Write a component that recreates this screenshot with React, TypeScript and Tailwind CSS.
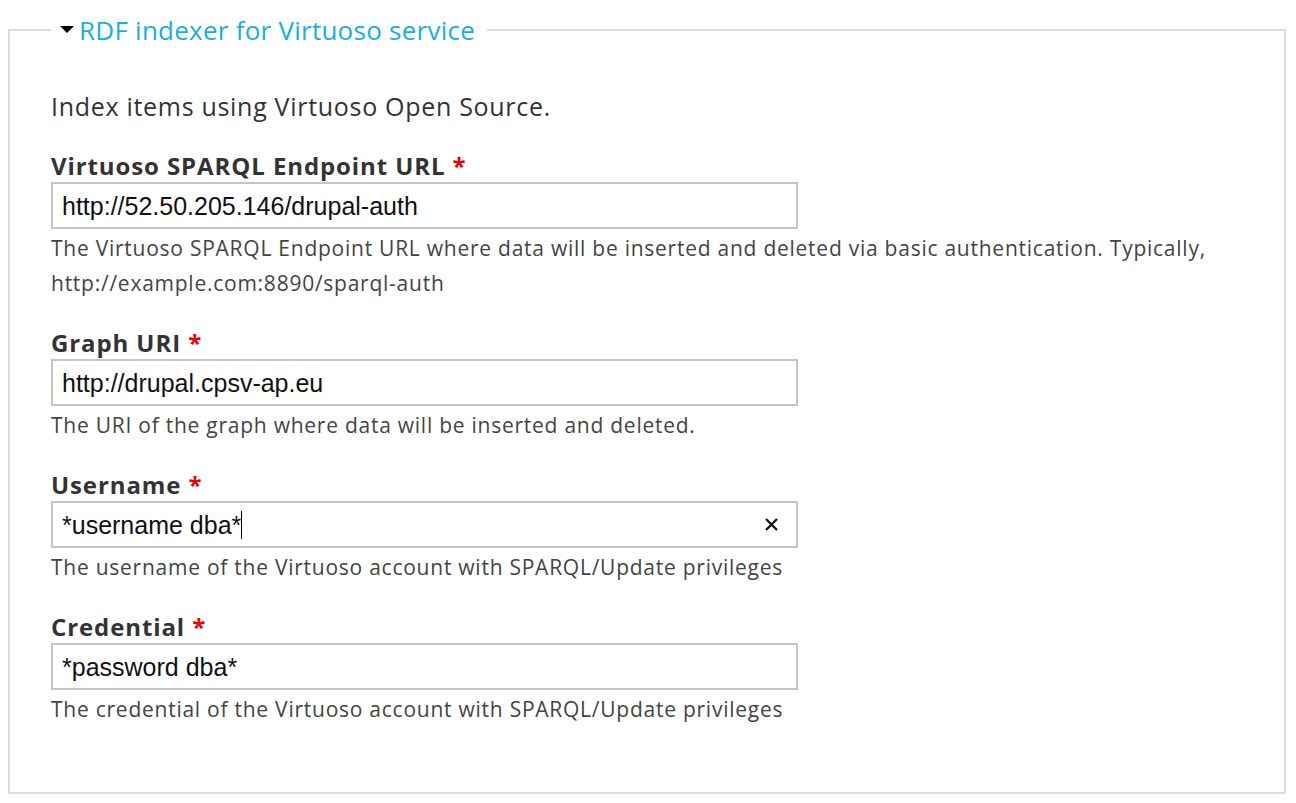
import React from 'react';

type Field = {
    label: string;
    value: string;
    help: string[];
    clearable?: boolean;
};

const fields: Field[] = [
    {
        label: 'Virtuoso SPARQL Endpoint URL',
        value: 'http://52.50.205.146/drupal-auth',
        help: [
            'The Virtuoso SPARQL Endpoint URL where data will be inserted and deleted via basic authentication. Typically,',
            'http://example.com:8890/sparql-auth',
        ],
    },
    {
        label: 'Graph URI',
        value: 'http://drupal.cpsv-ap.eu',
        help: ['The URI of the graph where data will be inserted and deleted.'],
    },
    {
        label: 'Username',
        value: '*username dba*',
        help: ['The username of the Virtuoso account with SPARQL/Update privileges'],
        clearable: true,
    },
    {
        label: 'Credential',
        value: '*password dba*',
        help: ['The credential of the Virtuoso account with SPARQL/Update privileges'],
    },
];

function FormField({ field, first }: { field: Field; first: boolean }) {
    return (
        <div className={first ? 'mt-[26px]' : 'mt-[26px]'}>
            <label className="block text-[24px] leading-[32px] font-bold tracking-[0.9px] text-[#333]">
                {field.label} <span className="text-[#e00]">*</span>
            </label>
            <div className="flex items-center w-[747px] h-[47px] border-2 border-[#c4c4c4] bg-white pl-[9px] pr-[14px]">
                <span className="flex-1 text-[25px] leading-[30px] text-[#111] font-['Liberation_Sans',Arial,sans-serif]">
                    {field.value}
                    {field.clearable && <span className="inline-block w-px h-[28px] bg-black align-middle -mt-[4px]"></span>}
                </span>
                {field.clearable && (
                    <svg width="15" height="15" viewBox="0 0 15 15" className="mr-[3px]">
                        <path d="M2 2 L13 13 M13 2 L2 13" stroke="#111" strokeWidth="2.3" />
                    </svg>
                )}
            </div>
            <div className="mt-[2px]">
                {field.help.map((line) => (
                    <p key={line} className="text-[21px] leading-[35px] tracking-[0.75px] text-[#444]">
                        {line}
                    </p>
                ))}
            </div>
        </div>
    );
}

export default function App() {
    return (
        <div className="min-h-[803px] bg-white font-['Open_Sans','Noto_Sans',sans-serif]">
            <fieldset className="mt-[12px] ml-[8px] mr-[10px] border-2 border-[#dcdcdc] pl-[41px] pr-[41px] pt-[40px] pb-[65px] min-w-0">
                <legend className="pl-[9px] pr-[12px] flex items-center gap-[5px] text-[26px] leading-[36px] tracking-[0.25px] text-[#17aee6]">
                    <svg width="14" height="8" viewBox="0 0 14 8">
                        <path d="M0 0 H14 L7 7 Z" fill="#000" />
                    </svg>
                    <span>RDF indexer for Virtuoso service</span>
                </legend>
                <p className="text-[25px] leading-[36px] tracking-[0.7px] text-[#333]">Index items using Virtuoso Open Source.</p>
                {fields.map((f, i) => (
                    <FormField key={f.label} field={f} first={i === 0} />
                ))}
            </fieldset>
        </div>
    );
}
